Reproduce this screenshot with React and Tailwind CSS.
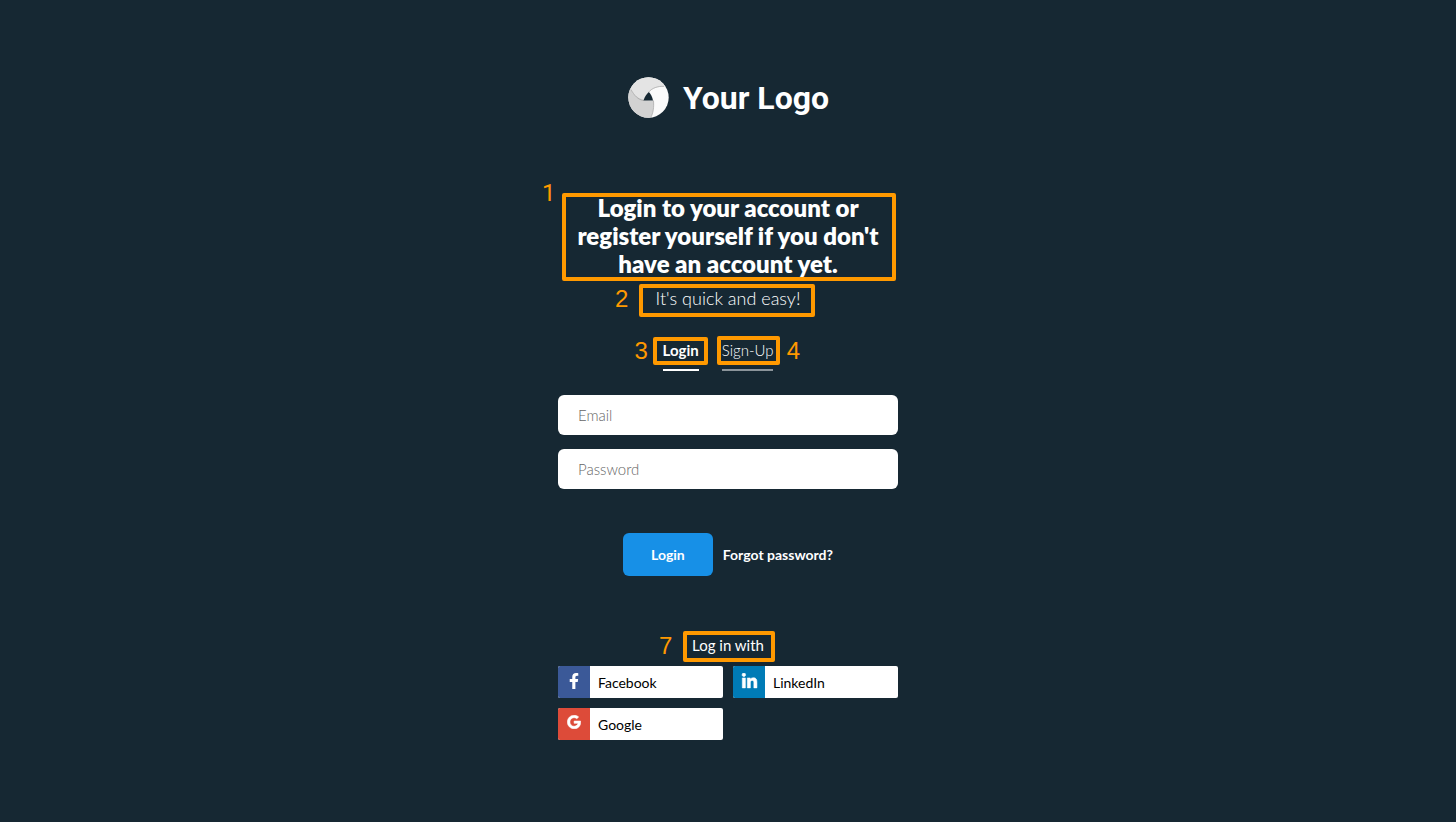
import { FaFacebookF, FaLinkedinIn, FaGoogle } from "react-icons/fa";

function Logo() {
  return (
    <div className="flex items-center justify-center gap-[14px] pl-px">
      <svg viewBox="0 0 41 41" className="size-[41px]" aria-hidden="true">
        <defs>
          <clipPath id="disc">
            <circle cx="20.5" cy="20.5" r="20.2" />
          </clipPath>
        </defs>
        <g clipPath="url(#disc)">
          <rect width="41" height="41" fill="#fafafa" />
          <path d="M-2 -2H43V10L36 9.400C27 9 19 14 16 23C10 22 6 18 3 12.500L-2 12Z" fill="#e4e4e4" />
          <path d="M-2 12L3 12.500C6 18 10 23.500 25.500 23.500C26 30 25.500 36 22.500 41V43H-2Z" fill="#d2d2d2" />
          <path d="M36 9.400C30 9 24 11 20.800 15M3 12.500C6 18 10 23 16 23.500M25.500 23.500C26 30 25.500 36 22.500 41" fill="none" stroke="#9a9a9a" strokeWidth="0.6" />
        </g>
        <path d="M20.800 15C22.500 16.500 24.500 20 25 23.500H15.500C16.500 20 18.500 17 20.800 15Z" fill="#162833" />
      </svg>
      <span className="font-['Roboto',sans-serif] text-[32px] leading-[40px] font-bold">Your Logo</span>
    </div>
  );
}

function Outline({ className }) {
  return (
    <span
      aria-hidden="true"
      className={`pointer-events-none absolute rounded-xs border-4 border-[#ff9900] ${className}`}
    />
  );
}

function Marker({ className, font = "font-['Liberation_Sans',sans-serif]", children }) {
  return (
    <span className={`absolute text-2xl leading-6 font-normal text-[#ff9900] ${font} ${className}`}>
      {children}
    </span>
  );
}

function Field({ type, label }) {
  return (
    <input
      type={type}
      aria-label={label}
      placeholder={label}
      className="block h-10 w-full rounded-md bg-white px-5 text-[15px] font-light text-black outline-none placeholder:text-[#666666]"
    />
  );
}

function SocialButton({ icon: Icon, color, iconClass, children }) {
  return (
    <button type="button" className="flex h-8 items-stretch overflow-hidden rounded-xs bg-white text-left text-sm text-black">
      <span className={`flex w-8 items-start justify-center pt-[7px] text-white ${color}`}>
        <Icon className={iconClass} />
      </span>
      <span className="px-2 pt-px leading-8">{children}</span>
    </button>
  );
}

export default function App() {
  return (
    <main className="flex min-h-screen flex-col items-center bg-[#162833] px-4 pt-[77px] pb-20 font-['Lato',sans-serif] text-white">
      <div className="w-full max-w-[340px]">
        <Logo />

        <header className="mt-[76px] text-center">
          <div className="relative">
            <h1 className="font-['Lato',sans-serif] text-2xl leading-7 font-extrabold">
              Login to your account or register yourself if you don't have an account yet.
            </h1>
            <Outline className="-top-px right-[2px] -bottom-[3px] left-1" />
            <Marker className="-top-[13px] -left-[16px]" font="font-['Roboto',sans-serif]">1</Marker>
          </div>
          <div className="relative mt-2">
            <p className="text-lg leading-6 font-light">It's quick and easy!</p>
            <Outline className="-top-[2px] left-[81px] h-[33px] w-[176px]" />
            <Marker className="top-[1px] left-[57px]">2</Marker>
          </div>
        </header>

        <nav className="mt-[29px] flex justify-center gap-[23px] pr-5">
          <div className="relative">
            <a href="#login" className="block border-b-2 border-white pb-2 text-[15px] leading-[22px] font-bold">
              Login
            </a>
            <Outline className="-top-[2px] -left-[10px] h-7 w-[55px]" />
            <Marker className="top-0 -left-7">3</Marker>
          </div>
          <div className="relative">
            <a href="#sign-up" className="block border-b-2 border-[#8b949a] pb-2 text-[15px] leading-[22px] font-light">
              Sign-Up
            </a>
            <Outline className="-top-[3px] -left-[5px] h-[29px] w-[63px]" />
            <Marker className="top-0 left-[65px]">4</Marker>
          </div>
        </nav>

        <form className="mt-6" onSubmit={(event) => event.preventDefault()}>
          <div className="flex flex-col gap-[14px]">
            <Field type="email" label="Email" />
            <Field type="password" label="Password" />
          </div>
          <div className="mt-11 flex items-center justify-center gap-[10px] text-sm font-bold">
            <button type="submit" className="h-[43px] rounded-md bg-[#1790e7] px-7">
              Login
            </button>
            <a href="#forgot-password">Forgot password?</a>
          </div>
        </form>

        <section className="mt-[58px]">
          <div className="relative">
            <h2 className="text-center text-[15px] leading-[22px]">Log in with</h2>
            <Outline className="-top-[3px] left-[125px] h-[31px] w-[92px]" />
            <Marker className="top-0 left-[101px]">7</Marker>
          </div>
          <div className="mt-[10px] grid grid-cols-2 gap-[10px]">
            <SocialButton icon={FaFacebookF} color="bg-[#3b5998]" iconClass="size-4">
              Facebook
            </SocialButton>
            <SocialButton icon={FaLinkedinIn} color="bg-[#007bb6]" iconClass="size-[17px] stroke-16">
              LinkedIn
            </SocialButton>
            <SocialButton icon={FaGoogle} color="bg-[#dd4b39]" iconClass="size-[14px] stroke-20">
              Google
            </SocialButton>
          </div>
        </section>
      </div>
    </main>
  );
}
